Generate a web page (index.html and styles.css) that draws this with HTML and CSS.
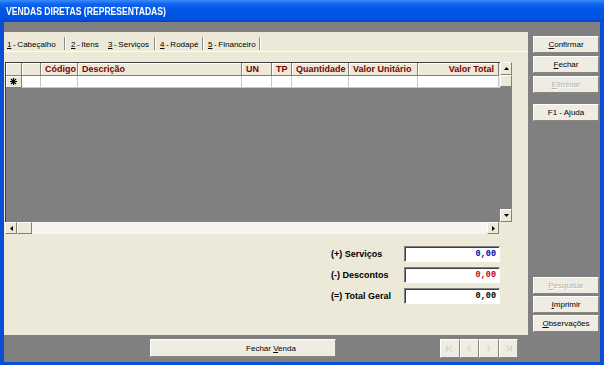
FILE: index.html
```html
<!DOCTYPE html>
<html lang="pt">
<head>
    <meta charset="UTF-8">
    <title>Vendas Diretas</title>
    <link rel="stylesheet" href="styles.css">
</head>
<body>

<div class="window">
    <div class="titlebar"><span class="title-text">VENDAS DIRETAS (REPRESENTADAS)</span></div>

    <div class="client">
        <div class="topband"></div>

        <div class="main">
            <div class="panel">
                <!-- abas -->
                <div class="tabs">
                    <div class="tab t1 sep"><span><u>1</u> - Cabeçalho</span></div>
                    <div class="tab t2"><span><u>2</u> - Itens</span></div>
                    <div class="tab t3 sep"><span><u>3</u> - Serviços</span></div>
                    <div class="tab t4 sep"><span><u>4</u> - Rodapé</span></div>
                    <div class="tab t5 sep"><span><u>5</u> - Financeiro</span></div>
                </div>

                <!-- grade de servicos -->
                <div class="grid">
                    <div class="grid-top">
                        <div class="grid-main">
                            <div class="cols head">
                                <div class="hcell"></div>
                                <div class="hcell"></div>
                                <div class="hcell">Código</div>
                                <div class="hcell">Descrição</div>
                                <div class="hcell">UN</div>
                                <div class="hcell">TP</div>
                                <div class="hcell">Quantidade</div>
                                <div class="hcell">Valor Unitário</div>
                                <div class="hcell right">Valor Total</div>
                            </div>
                            <div class="cols row">
                                <div class="ind">
                                    <svg width="7" height="7" viewBox="0 0 7 7"><path d="M3.5 0V7M0 3.5H7M1 1L6 6M6 1L1 6" stroke="#000" stroke-width="1.1"/></svg>
                                </div>
                                <div class="cell"></div>
                                <div class="cell"></div>
                                <div class="cell"></div>
                                <div class="cell"></div>
                                <div class="cell"></div>
                                <div class="cell"></div>
                                <div class="cell"></div>
                                <div class="cell"></div>
                            </div>
                            <div class="grid-body"></div>
                        </div>
                        <div class="vscroll">
                            <div class="sbtn"><svg width="5" height="3" viewBox="0 0 5 3"><path d="M2.5 0L5 3H0Z"/></svg></div>
                            <div class="thumb-v"></div>
                            <div class="vtrack"></div>
                            <div class="sbtn"><svg width="5" height="3" viewBox="0 0 5 3"><path d="M0 0H5L2.5 3Z"/></svg></div>
                        </div>
                    </div>
                    <div class="hscroll">
                        <div class="sbtn"><svg width="3" height="5" viewBox="0 0 3 5"><path d="M3 0V5L0 2.5Z"/></svg></div>
                        <div class="thumb-h"></div>
                        <div class="htrack"></div>
                        <div class="sbtn"><svg width="3" height="5" viewBox="0 0 3 5"><path d="M0 0V5L3 2.5Z"/></svg></div>
                        <div class="corner"></div>
                    </div>
                </div>

                <!-- totais -->
                <div class="totals">
                    <div class="tlabel">(+) Serviços</div>
                    <div class="tbox blue">0,00</div>
                    <div class="tlabel">(-) Descontos</div>
                    <div class="tbox red">0,00</div>
                    <div class="tlabel">(=) Total Geral</div>
                    <div class="tbox">0,00</div>
                </div>
            </div>

            <div class="side">
                <div class="btn"><span><u>C</u>onfirmar</span></div>
                <div class="btn"><span><u>F</u>echar</span></div>
                <div class="btn disabled"><span><u>E</u>liminar</span></div>
                <div class="btn help"><span>F1 - Ajuda</span></div>

                <div class="bottom-group">
                    <div class="btn disabled"><span><u>P</u>esquisar</span></div>
                    <div class="btn"><span><u>I</u>mprimir</span></div>
                    <div class="btn"><span><u>O</u>bservações</span></div>
                </div>
            </div>
        </div>

        <div class="bottombar">
            <div class="btn close-sale"><span>Fechar <u>V</u>enda</span></div>
            <div class="nav">
                <div class="btn nbtn"><svg width="7" height="7" viewBox="0 0 7 7"><path d="M1 0.5V6.5M5.5 0.5L3 3.5L5.5 6.5" fill="none" stroke="#c9c5b6"/></svg></div>
                <div class="btn nbtn"><svg width="7" height="7" viewBox="0 0 7 7"><path d="M4.5 0.5L2 3.5L4.5 6.5" fill="none" stroke="#c9c5b6"/></svg></div>
                <div class="btn nbtn"><svg width="7" height="7" viewBox="0 0 7 7"><path d="M2.5 0.5L5 3.5L2.5 6.5" fill="none" stroke="#c9c5b6"/></svg></div>
                <div class="btn nbtn"><svg width="7" height="7" viewBox="0 0 7 7"><path d="M1.5 0.5L4 3.5L1.5 6.5M6 0.5V6.5" fill="none" stroke="#c9c5b6"/></svg></div>
            </div>
        </div>
    </div>
</div>

</body>
</html>
```

FILE: styles.css
```css
body {
    margin: 0;
    font-family: "Liberation Sans", Arial, sans-serif;
    font-size: 8.5px;
    color: #000;
}

.window {
    width: 604px;
    height: 365px;
    display: flex;
    flex-direction: column;
    background-color: #0a4ed6;
}

.titlebar {
    height: 22px;
    flex-shrink: 0;
    display: flex;
    align-items: center;
    padding-left: 6px;
    color: white;
    font-weight: bold;
    font-size: 10.5px;
    background: linear-gradient(#3b8cf9 0%, #0f64ee 18%, #0057e7 45%, #0053e2 80%, #0046cf 100%);
}

.title-text {
    display: inline-block;
    transform: scaleX(0.82);
    transform-origin: left center;
    white-space: nowrap;
}

.client {
    flex: 1;
    margin: 0 4px 3px 4px;
    background-color: #808080;
    display: flex;
    flex-direction: column;
}

.topband {
    height: 10px;
}

.main {
    height: 303px;
    display: flex;
}

.panel {
    width: 524px;
    background-color: #ece9d8;
    display: flex;
    flex-direction: column;
}

/* abas */
.tabs {
    height: 19px;
    display: flex;
    border-bottom: 1px solid #fff;
    font-size: 8px;
    word-spacing: -0.6px;
}

.tab {
    display: flex;
    align-items: center;
    padding-top: 5px;
    box-sizing: border-box;
    height: 19px;
    white-space: nowrap;
}

.tab.sep {
    position: relative;
}

.tab.sep::after {
    content: "";
    position: absolute;
    right: 0;
    top: 5px;
    height: 13px;
    width: 1px;
    background-color: #8f8c80;
    box-shadow: 1px 0 #fff;
}

.t1 { width: 61px; padding-left: 3px; }
.t2 { width: 39px; padding-left: 6px; }
.t3 { width: 51px; padding-left: 4px; }
.t4 { width: 48px; padding-left: 5px; }
.t5 { width: 57px; padding-left: 5px; }

/* grade */
.grid {
    margin: 10px 0 0 1px;
    width: 507px;
    display: flex;
    flex-direction: column;
}

.grid-top {
    height: 160px;
    display: flex;
}

.grid-main {
    flex: 1;
    display: flex;
    flex-direction: column;
    border-top: 1px solid #404040;
    border-left: 1px solid #404040;
}

.cols {
    display: grid;
    grid-template-columns: 16px 19px 37px 164px 30px 20px 57px 69px 81px;
}

.head {
    height: 13px;
}

.hcell {
    background-color: #ece9d8;
    border-right: 1px solid #808080;
    border-bottom: 1px solid #808080;
    box-shadow: inset 1px 1px #fff;
    color: #800000;
    font-weight: bold;
    font-size: 9px;
    padding-left: 4px;
    line-height: 12px;
    white-space: nowrap;
    overflow: hidden;
}

.hcell.right {
    text-align: right;
    padding-right: 4px;
}

.row {
    height: 12px;
}

.cell {
    background-color: #fff;
    border-right: 1px solid #c8c8c8;
    border-bottom: 1px solid #c8c8c8;
}

.ind {
    background-color: #ece9d8;
    border-right: 1px solid #808080;
    border-bottom: 1px solid #808080;
    box-shadow: inset 1px 1px #fff;
    display: flex;
    align-items: center;
    justify-content: center;
}

.grid-body {
    flex: 1;
    background-color: #808080;
}

.vscroll {
    width: 12px;
    display: flex;
    flex-direction: column;
}

.sbtn {
    width: 12px;
    height: 13px;
    box-sizing: border-box;
    background-color: #ece9d8;
    border: 1px solid;
    border-color: #fff #808080 #808080 #fff;
    display: flex;
    align-items: center;
    justify-content: center;
}

.thumb-v {
    height: 12px;
    box-sizing: border-box;
    background-color: #ece9d8;
    border: 1px solid;
    border-color: #fff #808080 #808080 #fff;
}

.vtrack {
    flex: 1;
    background-color: #808080;
}

.hscroll {
    height: 12px;
    display: flex;
}

.hscroll .sbtn {
    height: 12px;
}

.thumb-h {
    width: 15px;
    box-sizing: border-box;
    background-color: #ece9d8;
    border: 1px solid;
    border-color: #fff #808080 #808080 #fff;
}

.htrack {
    flex: 1;
    background-color: #f5f4ee;
}

.corner {
    width: 13px;
    background-color: #ece9d8;
}

/* totais */
.totals {
    margin: 12px 0 0 327px;
    display: grid;
    grid-template-columns: 73px 96px;
    grid-auto-rows: 16px;
    row-gap: 5px;
    align-items: center;
}

.tlabel {
    font-weight: bold;
    font-size: 9px;
}

.tbox {
    height: 16px;
    box-sizing: border-box;
    background-color: #fff;
    border: 1px solid;
    border-color: #808080 #fff #fff #808080;
    box-shadow: inset 1px 1px #404040;
    text-align: right;
    padding-right: 3px;
    font-family: "Liberation Mono", monospace;
    font-weight: bold;
    font-size: 8.5px;
    line-height: 14px;
}

.blue { color: #0000b0; }
.red { color: #c00010; }

/* botoes laterais */
.side {
    flex: 1;
    padding: 4px 1px 3px 5px;
    display: flex;
    flex-direction: column;
    gap: 3px;
}

.btn {
    height: 17px;
    box-sizing: border-box;
    background-color: #efede3;
    border: 1px solid;
    border-color: #fff #8a877a #8a877a #fff;
    display: flex;
    align-items: center;
    justify-content: center;
    white-space: nowrap;
    font-size: 8px;
}

.btn.disabled {
    color: #b5b1a2;
    text-shadow: 1px 1px #fff;
}

.btn.help {
    margin-top: 8px;
}

.bottom-group {
    margin-top: auto;
    display: flex;
    flex-direction: column;
    gap: 2px;
}

/* barra inferior */
.bottombar {
    flex: 1;
    display: flex;
    align-items: flex-start;
    padding-top: 4px;
}

.close-sale {
    margin-left: 146px;
    width: 186px;
    height: 18px;
    padding-left: 56px;
}

.nav {
    margin-left: 104px;
    display: flex;
}

.nbtn {
    width: 19.5px;
    height: 19px;
}
```
